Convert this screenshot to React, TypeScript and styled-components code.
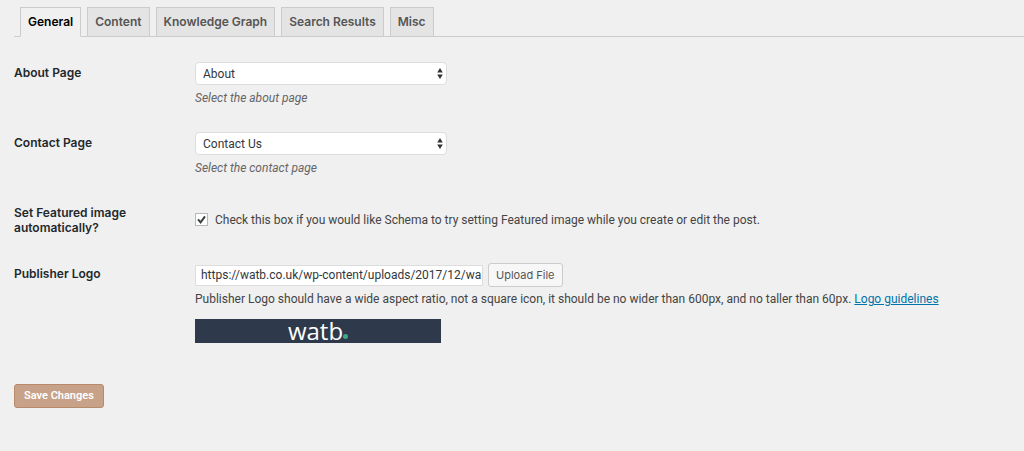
import React from "react";
import styled, { createGlobalStyle } from "styled-components";

const headingFont = `Inter, "Liberation Sans", sans-serif`;

const GlobalStyle = createGlobalStyle`
  *, *::before, *::after { box-sizing: border-box; }
  body {
    margin: 0;
    background: #f0f0f0;
    color: #444;
    font: 12px/16px Roboto, "Liberation Sans", sans-serif;
  }
  button, input, select { font: inherit; color: inherit; margin: 0; }
`;

const Page = styled.main`
  padding: 7px 0 42px 14px;
`;

const Tabs = styled.nav`
  display: flex;
  gap: 6px;
  padding-left: 6px;
  border-bottom: 1px solid #ccc;
`;

const Tab = styled.a<{ $active?: boolean }>`
  height: 30px;
  margin-bottom: -1px;
  padding: 6px 7px;
  border: 1px solid #ccc;
  border-bottom-color: ${(p) => (p.$active ? "#f0f0f0" : "#ccc")};
  background: ${(p) => (p.$active ? "#f0f0f0" : "#e4e4e4")};
  color: ${(p) => (p.$active ? "#000" : "#555")};
  font-family: ${headingFont};
  font-weight: 600;
  text-decoration: none;
  white-space: nowrap;
`;

const Fields = styled.div`
  display: grid;
  gap: 26px;
  padding: 25px 20px 0 0;
`;

const Row = styled.div`
  display: grid;
  grid-template-columns: 140px minmax(0, 1fr);
  column-gap: 41px;
`;

const RowLabel = styled.label`
  padding-top: 3px;
  color: #23282d;
  font-family: ${headingFont};
  font-weight: 600;
  line-height: 15px;
`;

const SelectWrap = styled.div`
  position: relative;
  width: 252px;
  max-width: 100%;
`;

const Select = styled.select`
  display: block;
  width: 100%;
  height: 23px;
  padding: 0 20px 0 7px;
  appearance: none;
  border: 1px solid #ddd;
  border-radius: 4px;
  background: #fff;
  color: #32373c;
`;

const Arrows = styled.svg`
  position: absolute;
  top: 6px;
  right: 4px;
  width: 6px;
  height: 11px;
  pointer-events: none;
`;

const Hint = styled.p`
  margin: 5px 0 0;
  color: #666;
  font-style: italic;
`;

const CheckLabel = styled.label`
  display: flex;
  align-items: center;
  gap: 7px;
  height: 35px;
`;

const CheckWrap = styled.span`
  position: relative;
  display: flex;
`;

const Checkbox = styled.input`
  width: 13px;
  height: 13px;
  appearance: none;
  border: 1px solid #b4b9be;
  background: #fff;
  & + svg { visibility: hidden; }
  &:checked + svg { visibility: visible; }
`;

const Tick = styled.svg`
  position: absolute;
  inset: 0;
  width: 13px;
  height: 13px;
  pointer-events: none;
`;

const FileLine = styled.div`
  display: flex;
  align-items: center;
  gap: 5px;
`;

const UrlInput = styled.input`
  width: 288px;
  height: 21px;
  padding: 0 1px 0 5px;
  border: 1px solid #ddd;
  background: #fff;
  color: #32373c;
`;

const UploadButton = styled.button`
  height: 24px;
  padding: 0 7px;
  border: 1px solid #ccc;
  border-radius: 3px;
  background: #f7f7f7;
  color: #555;
  font-family: ${headingFont};
  font-size: 11px;
`;

const Note = styled.p`
  margin: 4px 0 0;
`;

const Link = styled.a`
  color: #0073aa;
`;

const LogoPreview = styled.div`
  display: flex;
  justify-content: center;
  align-items: center;
  width: 246px;
  height: 24px;
  margin-top: 12px;
  background: #2e3a4b;
  color: #fff;
  font: 24px/24px "Open Sans", "Noto Sans", sans-serif;
`;

const Dot = styled.span`
  align-self: flex-end;
  width: 5px;
  height: 5px;
  margin-bottom: 4px;
  border-radius: 50%;
  background: #3aa98c;
`;

const SaveButton = styled.button`
  height: 24px;
  margin-top: 41px;
  padding: 0 9px;
  border: 1px solid #b78a6c;
  border-radius: 3px;
  background: #c7a289;
  color: #fff;
  font-size: 11px;
  font-weight: 600;
`;

const tabs = ["General", "Content", "Knowledge Graph", "Search Results", "Misc"];

interface PageSelectProps {
  id: string;
  label: string;
  value: string;
  hint: string;
}

function PageSelect({ id, label, value, hint }: PageSelectProps) {
  return (
    <Row>
      <RowLabel htmlFor={id}>{label}</RowLabel>
      <div>
        <SelectWrap>
          <Select id={id} defaultValue={value}>
            <option>About</option>
            <option>Contact Us</option>
          </Select>
          <Arrows viewBox="0 0 6 11" aria-hidden="true">
            <path d="M3 0 5.8 4.4H.2ZM3 11 .2 6.6h5.6Z" fill="#333" />
          </Arrows>
        </SelectWrap>
        <Hint>{hint}</Hint>
      </div>
    </Row>
  );
}

export default function App() {
  return (
    <>
      <GlobalStyle />
      <Page>
        <Tabs>
          {tabs.map((name, i) => (
            <Tab key={name} href="#" $active={i === 0}>
              {name}
            </Tab>
          ))}
        </Tabs>
        <form onSubmit={(e) => e.preventDefault()}>
          <Fields>
            <PageSelect id="about" label="About Page" value="About" hint="Select the about page" />
            <PageSelect id="contact" label="Contact Page" value="Contact Us" hint="Select the contact page" />
            <Row>
              <RowLabel htmlFor="featured">Set Featured image automatically?</RowLabel>
              <CheckLabel>
                <CheckWrap>
                  <Checkbox id="featured" type="checkbox" defaultChecked />
                  <Tick viewBox="0 0 13 13" aria-hidden="true">
                    <path d="M3 6.4 5.6 9.4 10 3.4" fill="none" stroke="#3c4043" strokeWidth="2" />
                  </Tick>
                </CheckWrap>
                Check this box if you would like Schema to try setting Featured image while you create or edit the post.
              </CheckLabel>
            </Row>
            <Row>
              <RowLabel htmlFor="logo">Publisher Logo</RowLabel>
              <div>
                <FileLine>
                  <UrlInput id="logo" type="text" defaultValue="https://watb.co.uk/wp-content/uploads/2017/12/wa" />
                  <UploadButton type="button">Upload File</UploadButton>
                </FileLine>
                <Note>
                  Publisher Logo should have a wide aspect ratio, not a square icon, it should be no wider than 600px, and
                  no taller than 60px. <Link href="#">Logo guidelines</Link>
                </Note>
                <LogoPreview>
                  watb
                  <Dot />
                </LogoPreview>
              </div>
            </Row>
          </Fields>
          <SaveButton type="submit">Save Changes</SaveButton>
        </form>
      </Page>
    </>
  );
}
